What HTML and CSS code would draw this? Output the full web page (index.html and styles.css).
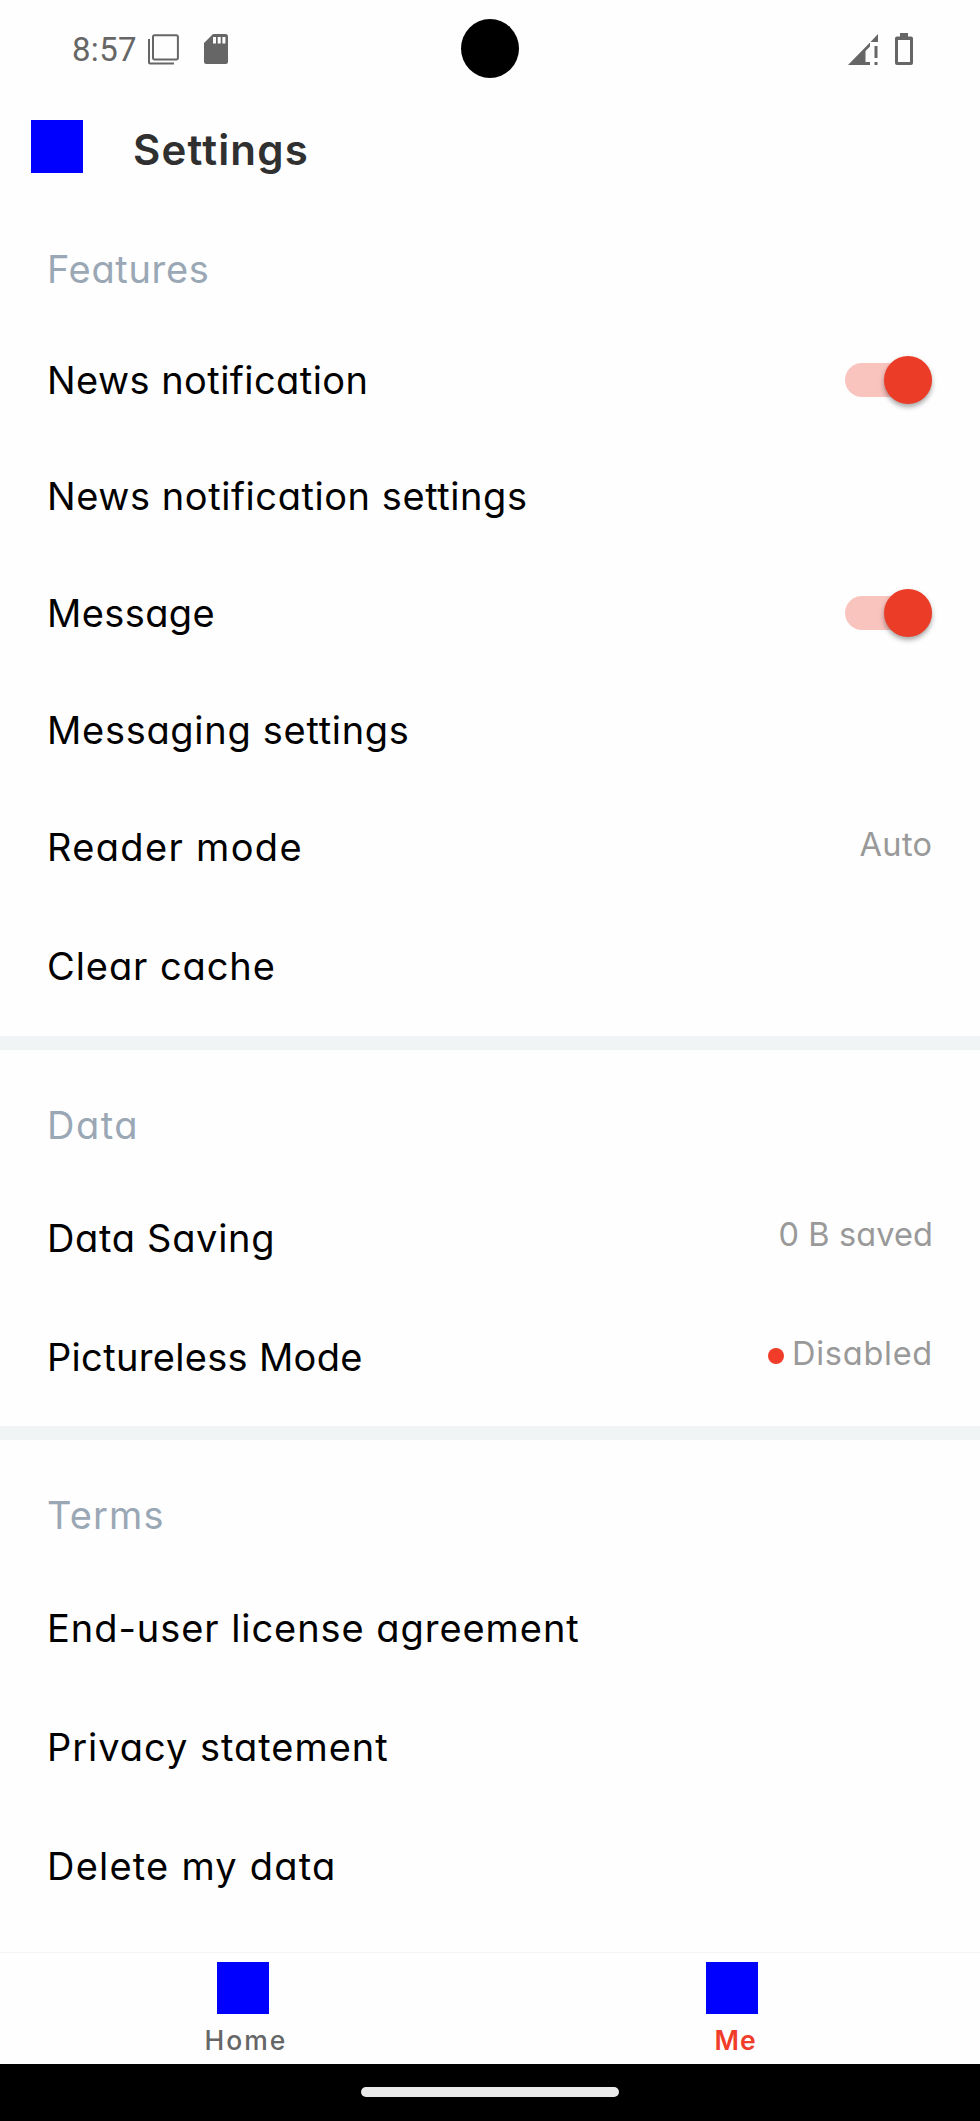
FILE: index.html
```
<!DOCTYPE html>
<html lang="en">
<head>
<meta charset="utf-8">
<title>Settings</title>
<link rel="stylesheet" href="styles.css">
</head>
<body>
<div class="screen">
  <header class="status">
    <span class="clock">8:57</span>
    <svg class="ico-copy" viewBox="0 0 31 31"><path d="M6.500 1.200h21.900a1.500 1.500 0 0 1 1.500 1.500v21.400a1.500 1.500 0 0 1-1.500 1.500H6.500a1.500 1.500 0 0 1-1.500-1.500V2.700a1.500 1.500 0 0 1 1.500-1.500zM1 5v23.500a1 1 0 0 0 1 1h24" fill="none" stroke="#666" stroke-width="2"/></svg>
    <svg class="ico-sd" viewBox="0 0 24 30"><path fill="#666" fill-rule="evenodd" d="M9 0h12.500A2.500 2.500 0 0 1 24 2.500v25a2.500 2.500 0 0 1-2.500 2.500h-19A2.500 2.500 0 0 1 0 27.500V9zM9 3v6.500h3V3zM13.700 3v6.500h3V3zM18.400 3v6.500h3V3z"/></svg>
    <span class="camera"></span>
    <svg class="ico-signal" viewBox="0 0 30 31"><path fill="#666" d="M30 0v8h-7.500zM22 8.500v4l-4.500 4.500V28H22v3H0zM26.500 12h3v12h-3zM26.500 28h3v3h-3z"/></svg>
    <svg class="ico-battery" viewBox="0 0 18 32"><path fill="#666" fill-rule="evenodd" d="M5 0h8v3.500h3A2 2 0 0 1 18 5.500v24.500a2 2 0 0 1-2 2H2a2 2 0 0 1-2-2V5.500a2 2 0 0 1 2-2h3zM3 7v22h12V7z"/></svg>
  </header>
  <div class="bar"><span class="back"></span><h1 class="title">Settings</h1></div>
  <main class="list">
    <section class="group features">
      <h2 class="heading first">Features</h2>
      <div class="row short"><span class="label news">News notification</span><span class="toggle"></span></div>
      <div class="row short"><span class="label news-settings">News notification settings</span></div>
      <div class="row short"><span class="label message">Message</span><span class="toggle"></span></div>
      <div class="row short"><span class="label messaging">Messaging settings</span></div>
      <div class="row"><span class="label reader">Reader mode</span><span class="value auto">Auto</span></div>
      <div class="row"><span class="label cache">Clear cache</span></div>
    </section>
    <section class="group data">
      <h2 class="heading">Data</h2>
      <div class="row"><span class="label saving">Data Saving</span><span class="value saved">0 B saved</span></div>
      <div class="row"><span class="label pictureless">Pictureless Mode</span><span class="value disabled"><i class="dot"></i>Disabled</span></div>
    </section>
    <section class="group terms">
      <h2 class="heading">Terms</h2>
      <div class="row"><span class="label license">End-user license agreement</span></div>
      <div class="row"><span class="label privacy">Privacy statement</span></div>
      <div class="row"><span class="label delete">Delete my data</span></div>
    </section>
  </main>
  <nav class="tabs">
    <a class="tab home"><i class="tab-icon"></i><span class="tab-label">Home</span></a>
    <a class="tab me"><i class="tab-icon"></i><span class="tab-label">Me</span></a>
  </nav>
  <div class="gesture"><span class="pill"></span></div>
</div>
</body>
</html>
```
FILE: styles.css
```
* { box-sizing: border-box; }
body { margin: 0; background: #fefefe; font-family: Inter, "Open Sans", sans-serif; font-feature-settings: "cv11"; color: #000; }
.screen { width: 980px; height: 2121px; display: flex; flex-direction: column; overflow: hidden; }

/* status bar */
.status { position: relative; height: 98px; flex: none; display: flex; align-items: center; padding: 0 67px 0 72px; }
.clock { font: 33px Roboto, sans-serif; letter-spacing: .300px; color: #666; }
.ico-copy { width: 31px; height: 31px; margin-left: 11.500px; }
.ico-sd { width: 24px; height: 30px; margin-left: 24.700px; }
.camera { position: absolute; left: 461px; top: 19px; width: 58px; height: 59px; border-radius: 50%; background: #000; }
.ico-signal { width: 30px; height: 31px; margin-left: auto; }
.ico-battery { width: 18px; height: 32px; margin-left: 17px; }

/* title bar */
.bar { height: 118.500px; flex: none; display: flex; padding: 22px 0 0 31px; }
.back { width: 52px; height: 53px; background: #00f; }
.title { margin: 0 0 0 50px; font-size: 42px; line-height: 60px; font-weight: 600; letter-spacing: 1.170px; color: #303030; }

/* settings list */
.list { flex: 1; min-height: 0; overflow: hidden; }
.features { padding-bottom: 10px; }
.data { padding-bottom: 9.500px; }
.data, .terms { border-top: 14px solid #f0f4f5; }
.heading { margin: 0; height: 128.500px; padding: 21px 47px 0; display: flex; align-items: center; font-size: 38px; font-weight: 400; color: #9aa7b5; letter-spacing: .660px; }
.heading.first { height: 104.700px; padding-top: 0; }
.data .heading { letter-spacing: 1.500px; }
.terms .heading { letter-spacing: 1.120px; }
.row { height: 119px; padding: 0 48px 0 47px; display: flex; align-items: center; justify-content: space-between; font-size: 38px; white-space: nowrap; }
.row.short { height: 116.700px; }
.news { letter-spacing: .440px; }
.news-settings { letter-spacing: .570px; }
.message { letter-spacing: .400px; }
.messaging { letter-spacing: .700px; }
.reader { letter-spacing: 1.340px; }
.cache { letter-spacing: .920px; }
.saving { letter-spacing: .680px; }
.pictureless { letter-spacing: .320px; }
.license { letter-spacing: .940px; }
.privacy { letter-spacing: .970px; }
.delete { letter-spacing: 1.220px; }
.value { display: flex; align-items: center; padding-bottom: 6px; font-size: 32.500px; color: #999; }
.auto { letter-spacing: .400px; margin-right: -.500px; }
.saved { letter-spacing: .100px; margin-right: -1px; }
.disabled { letter-spacing: .750px; margin-right: -1px; }
.dot { width: 16px; height: 16px; margin: 4px 8px 0 0; border-radius: 50%; background: #f03c28; }
.toggle { width: 87px; height: 34px; display: flex; align-items: center; justify-content: flex-end; background: #f9c3be; border-radius: 17px; }
.toggle::after { content: ""; flex: none; width: 48px; height: 48px; border-radius: 50%; background: #eb3c27; box-shadow: 0 3px 5px rgba(0, 0, 0, .35); }

/* bottom navigation */
.tabs { height: 111.500px; flex: none; display: flex; border-top: 1px solid #f5f5f5; background: #fefefe; }
.tab { flex: 1; display: flex; flex-direction: column; align-items: center; padding-top: 9px; font-size: 26.500px; font-weight: 500; color: #666; }
.tab-icon { flex: none; width: 52px; height: 52px; margin-right: 4px; background: #00f; }
.tab-label { margin-top: 3px; line-height: 46px; letter-spacing: 2px; margin-right: -2px; }
.me { font-weight: 600; color: #f03c28; }
.me .tab-icon { margin-right: 6px; }
.me .tab-label { letter-spacing: 1px; margin-right: -1px; }
.gesture { height: 57.500px; flex: none; display: flex; justify-content: center; padding-top: 23.500px; background: #000; }
.pill { width: 258px; height: 10px; border-radius: 5px; background: #ebebeb; }
```
